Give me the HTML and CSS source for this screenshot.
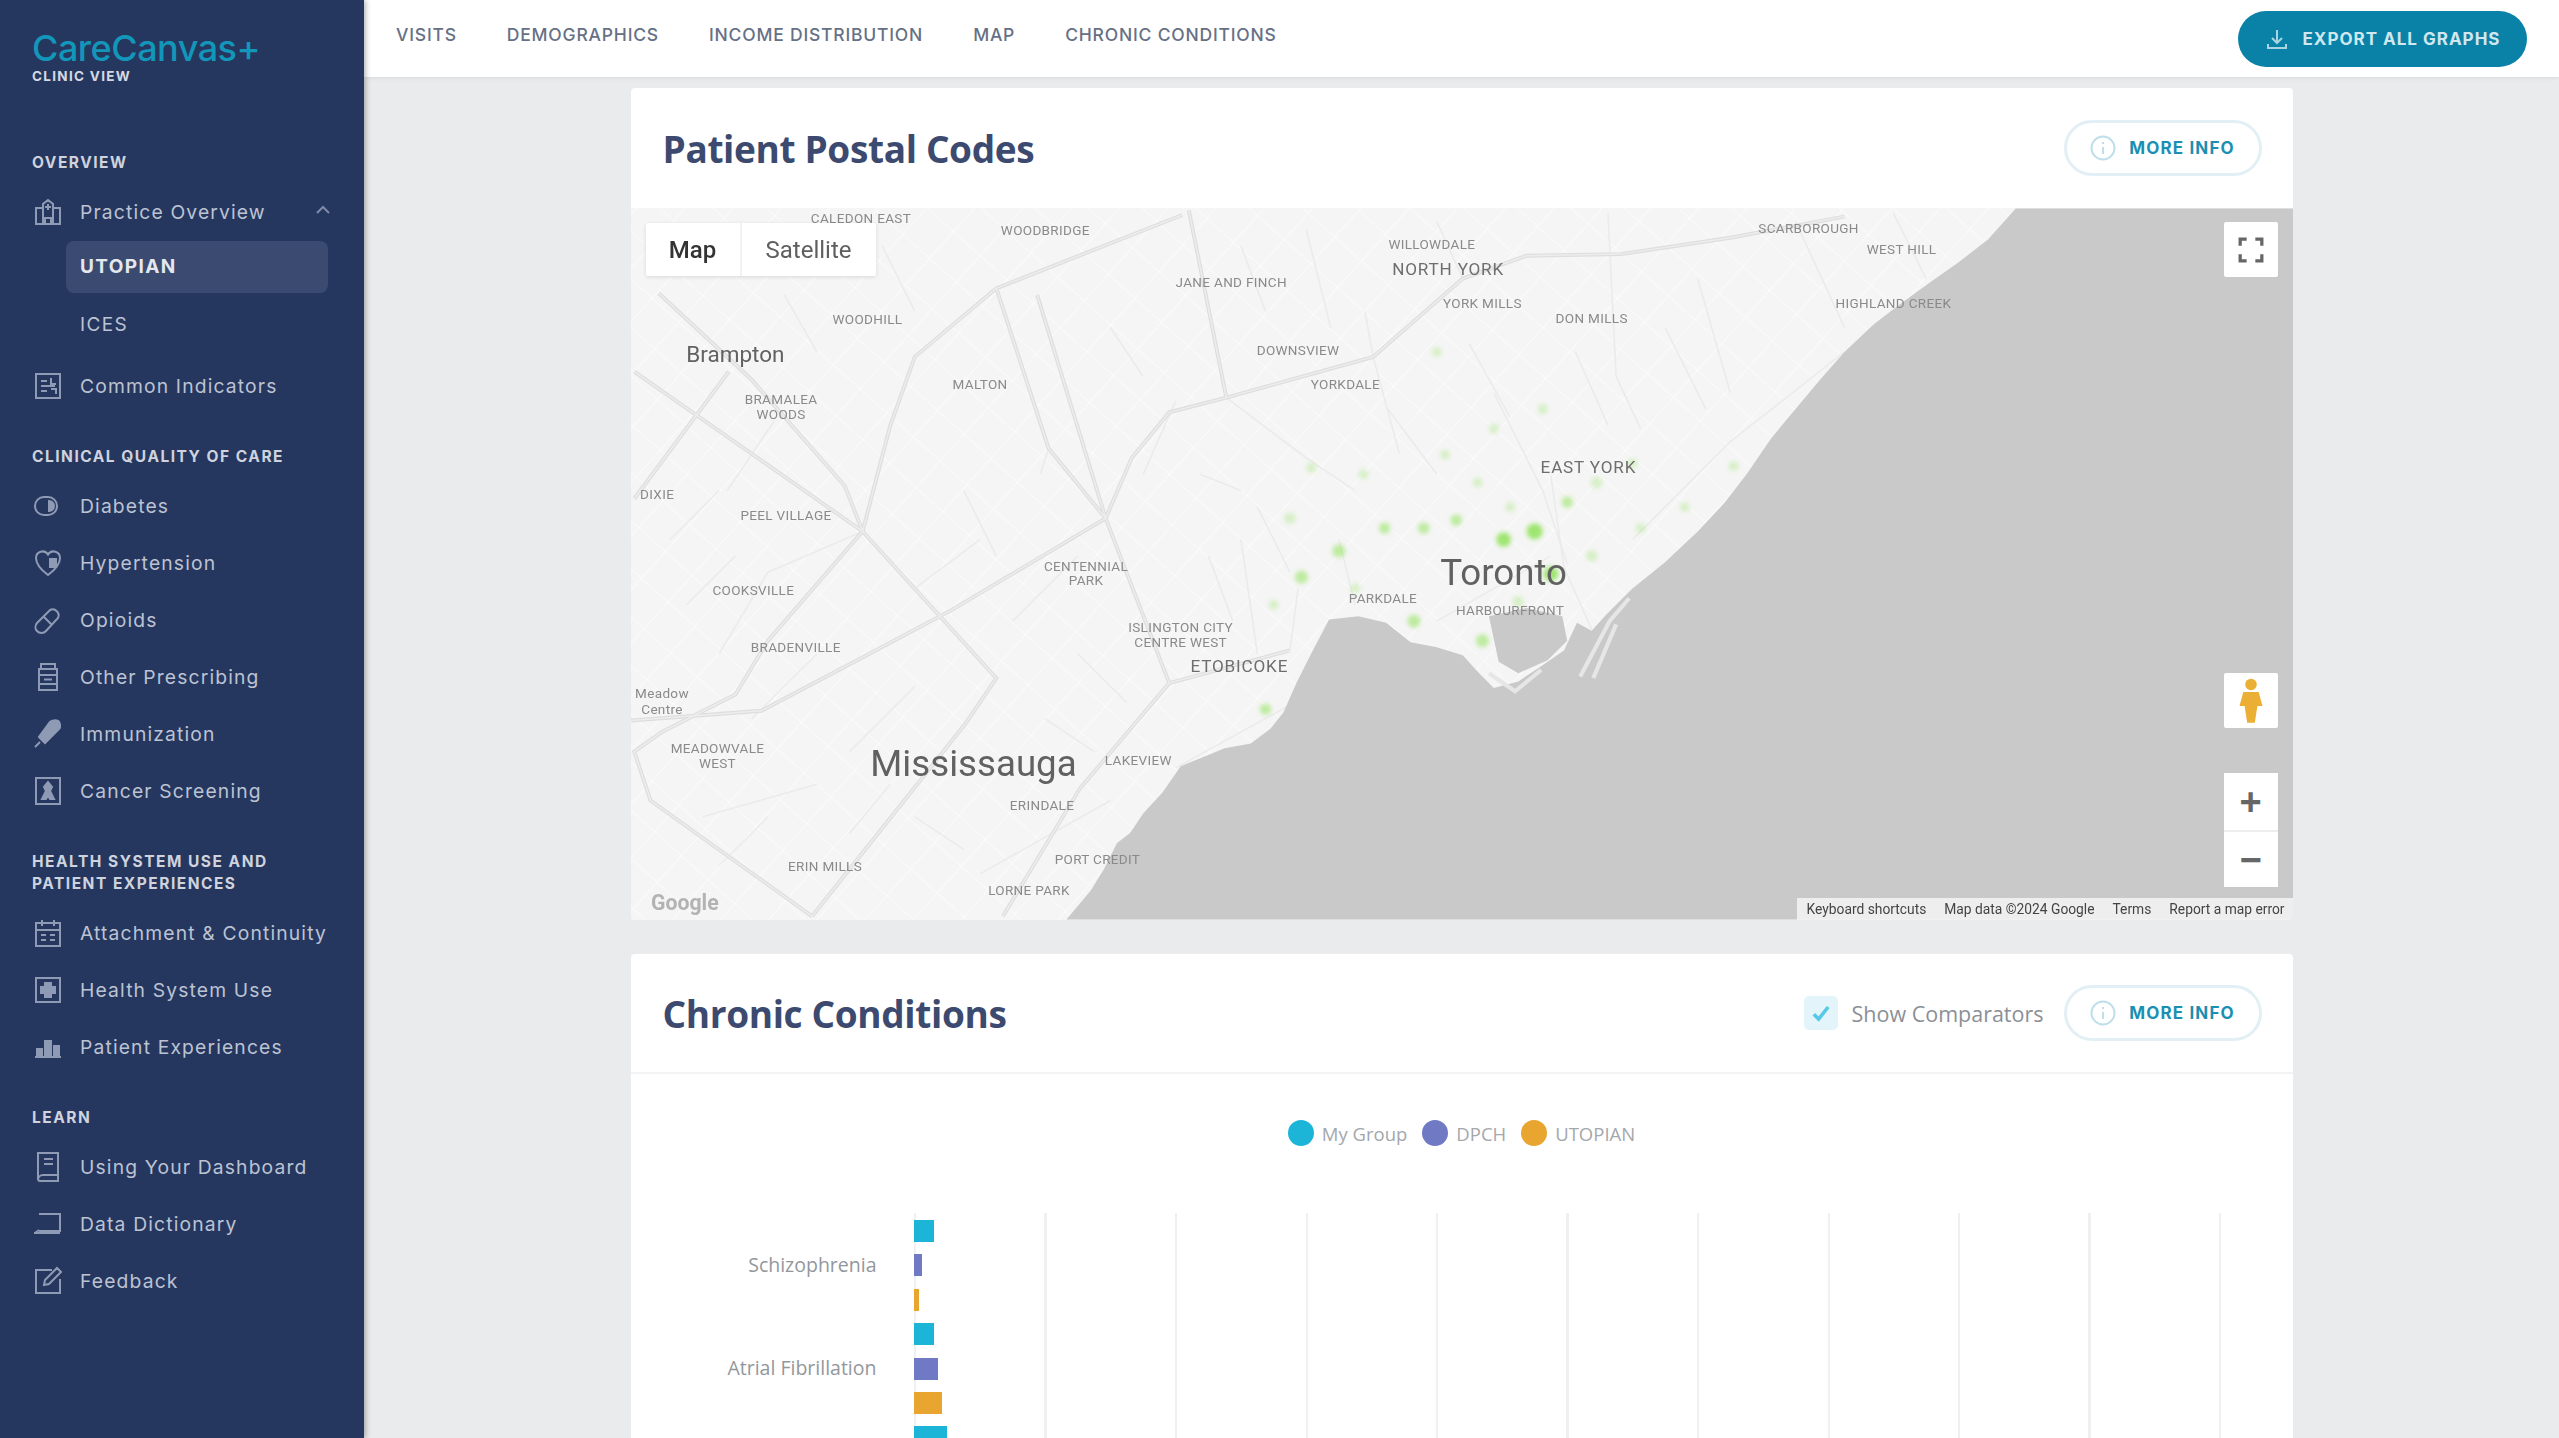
FILE: index.html
```html
<!DOCTYPE html>
<html lang="en">
<head>
<meta charset="utf-8">
<title>CareCanvas+ Clinic View</title>
<link rel="stylesheet" href="styles.css">
</head>
<body>
<div class="app">
  <aside class="sidebar">
    <div class="brand">
      <div class="logo">CareCanvas+</div>
      <div class="logo-sub">CLINIC VIEW</div>
    </div>

    <section class="section">
      <h2 class="section-title">OVERVIEW</h2>
      <a class="nav-row">
        <svg class="nav-icon" viewBox="0 0 32 32"><path d="M4 28V12h7V8l5-4 5 4v4h7v16zM11 12v16M21 12v16M13 28v-6h6v6M16 8v6M13 11h6"/></svg>
        <span class="nav-label">Practice Overview</span>
        <svg class="chevron" viewBox="0 0 16 10"><path d="M2 8l6-6 6 6"/></svg>
      </a>
      <div class="sub-list">
        <a class="sub-item active">UTOPIAN</a>
        <a class="sub-item">ICES</a>
      </div>
      <a class="nav-row">
        <svg class="nav-icon" viewBox="0 0 32 32"><path d="M4 4h24v24H4zM9 11h6M9 16h14M9 21h6M19 8v6h5M19 19h5v5"/></svg>
        <span class="nav-label">Common Indicators</span>
      </a>
    </section>

    <section class="section">
      <h2 class="section-title">CLINICAL QUALITY OF CARE</h2>
      <a class="nav-row">
        <svg class="nav-icon" viewBox="0 0 32 32"><path d="M16 7a9 9 0 1 1 0 18H12A9 9 0 0 1 12 7z"/><path d="M17 11a5 5 0 0 1 0 10z" class="fill"/></svg>
        <span class="nav-label">Diabetes</span>
      </a>
      <a class="nav-row">
        <svg class="nav-icon" viewBox="0 0 32 32"><path d="M16 28C8 22 4 17 4 11a6.500 6.500 0 0 1 12-3.500A6.500 6.500 0 0 1 28 11c0 6-4 11-12 17z"/><path d="M18 12l6 0 0 8-6 0z" class="fill"/></svg>
        <span class="nav-label">Hypertension</span>
      </a>
      <a class="nav-row">
        <svg class="nav-icon" viewBox="0 0 32 32"><path d="M5 27a6 6 0 0 1 0-8L18 6a6 6 0 0 1 8 8L14 27a6 6 0 0 1-9 0zM11 12l9 9"/></svg>
        <span class="nav-label">Opioids</span>
      </a>
      <a class="nav-row">
        <svg class="nav-icon" viewBox="0 0 32 32"><path d="M9 3h14v5H9zM7 8h18v21H7zM7 14h18M7 23h18M12 18.500h8"/></svg>
        <span class="nav-label">Other Prescribing</span>
      </a>
      <a class="nav-row">
        <svg class="nav-icon" viewBox="0 0 32 32"><path d="M3 29l5-5M7 19l6 6L27 11c2-2 1-7-1-8s-6-1-8 1z" class="fill"/></svg>
        <span class="nav-label">Immunization</span>
      </a>
      <a class="nav-row">
        <svg class="nav-icon" viewBox="0 0 32 32"><path d="M4 3h24v26H4z"/><path d="M16 7l4 5-2 4 4 8h-4l-2-4-2 4h-4l4-8-2-4z" class="fill"/></svg>
        <span class="nav-label">Cancer Screening</span>
      </a>
    </section>

    <section class="section">
      <h2 class="section-title">HEALTH SYSTEM USE AND PATIENT EXPERIENCES</h2>
      <a class="nav-row">
        <svg class="nav-icon" viewBox="0 0 32 32"><path d="M4 6h24v23H4zM4 13h24M10 3v6M22 3v6M9 18h5M18 18h5M9 23h5M18 23h5"/></svg>
        <span class="nav-label">Attachment &amp; Continuity</span>
      </a>
      <a class="nav-row">
        <svg class="nav-icon" viewBox="0 0 32 32"><path d="M4 4h24v24H4z"/><path d="M13 9h6v4h4v6h-4v4h-6v-4H9v-6h4z" class="fill"/></svg>
        <span class="nav-label">Health System Use</span>
      </a>
      <a class="nav-row">
        <svg class="nav-icon" viewBox="0 0 32 32"><path d="M3 26h26" /><path d="M5 18h5v8H5zM13 10h6v16h-6zM22 15h5v11h-5z" class="fill"/></svg>
        <span class="nav-label">Patient Experiences</span>
      </a>
    </section>

    <section class="section">
      <h2 class="section-title">LEARN</h2>
      <a class="nav-row">
        <svg class="nav-icon tall" viewBox="0 0 32 32"><path d="M6 2h20v22H11a5 5 0 0 0-5 5zM6 29a3 3 0 0 0 3 1h17v-6M12 8h9M12 13h9"/></svg>
        <span class="nav-label">Using Your Dashboard</span>
      </a>
      <a class="nav-row">
        <svg class="nav-icon" viewBox="0 0 32 32"><path d="M7 6h21v17H7M2 25h26M3 25l4-3"/></svg>
        <span class="nav-label">Data Dictionary</span>
      </a>
      <a class="nav-row">
        <svg class="nav-icon" viewBox="0 0 32 32"><path d="M28 14v14H4V5h16M12 20l1-5L25 3l4 4-12 12z"/></svg>
        <span class="nav-label">Feedback</span>
      </a>
    </section>
  </aside>

  <div class="main">
    <header class="topbar">
      <nav class="tabs">
        <a class="tab">VISITS</a>
        <a class="tab">DEMOGRAPHICS</a>
        <a class="tab">INCOME DISTRIBUTION</a>
        <a class="tab">MAP</a>
        <a class="tab">CHRONIC CONDITIONS</a>
      </nav>
      <button class="export">
        <svg class="export-icon" viewBox="0 0 24 24"><path d="M12 3v13M7 11l5 5 5-5M3 17v4h18v-4"/></svg>
        EXPORT ALL GRAPHS
      </button>
    </header>

    <div class="content">
      <article class="card">
        <div class="card-head">
          <h1 class="card-title">Patient Postal Codes</h1>
          <div class="card-actions">
            <button class="more">
              <svg class="more-icon" viewBox="0 0 26 26"><circle cx="13" cy="13" r="11.500"/><path d="M13 12v7M13 7v2"/></svg>
              MORE INFO
            </button>
          </div>
        </div>
        <div class="map">
          <svg class="map-canvas" viewBox="386 127 1019 436">
            <defs>
              <pattern id="streets" width="22" height="22" patternUnits="userSpaceOnUse" patternTransform="rotate(42)">
                <path d="M0 0H22M0 0V22" class="street-grid"/>
              </pattern>
              <filter id="soft" x="-60%" y="-60%" width="220%" height="220%"><feGaussianBlur stdDeviation="1.400"/></filter>
              <g id="majors">
                <path d="M386 441L466 435 536 398 583 373 677 317 693 280 716 252 751 243 841 218 896 170 935 156 993 155 1060 145 1130 132"/>
                <path d="M610 176L560 218 545 260 528 325 470 392 450 425 405 448 388 460 398 490 497 561"/>
                <path d="M388 227L528 325 610 415 591 443 497 561"/>
                <path d="M388 305L446 227M403 179L460 232 517 297 528 325"/>
                <path d="M610 176L724 131M610 176L642 274 677 317M635 180L677 317"/>
                <path d="M728 128L751 243M677 317L716 418 661 483 614 561M716 418L790 398"/>
              </g>
            </defs>
            <rect x="386" y="127" width="1019" height="436" class="land"/>
            <rect x="386" y="127" width="1019" height="436" fill="url(#streets)"/>
            <g class="road-minor">
              <path d="M841 218L857 277M841 218L836 190M896 170L880 135M950 291L958 347 975 385M985 130L990 230 1005 262"/>
              <path d="M474 257L445 300M440 400L470 350 528 325M642 274L637 290M700 290L720 245M770 310L790 350M760 330L770 400"/>
              <path d="M751 243L800 280 830 300M915 240L945 300 960 345M1000 330L1060 270 1130 215M1040 170L1060 240M1100 135L1130 200M1160 130L1180 170"/>
              <path d="M600 535L680 490M720 470L820 415M790 398L795 360M820 330L830 370M880 380L950 340"/>
              <path d="M430 500L500 480M520 460L560 420M620 380L660 340M460 440L500 400"/>
              <path d="M590 300L610 340M560 360L600 330M480 180L500 215M540 150L560 190M680 200L700 230M760 150L775 190M800 140L815 200M850 250L880 290M900 210L925 255M965 215L985 260M1020 200L1045 250M735 290L760 300M740 340L755 380M660 400L690 430M640 440L670 460M560 500L590 520M520 510L545 480M440 530L470 500M420 370L450 340M410 330L440 300"/>
            </g>
            <g class="road-major-edge"><use href="#majors"/></g>
            <g class="road-major-core"><use href="#majors"/></g>
            <path class="water" d="M653 563L668 545 676 532 684 516 692 510 700 498 712 485 723 469 750 458 766 455 778 446 786 436 794 418 803 400 814 379 832 377 849 381 864 393 880 396 896 401 906 412 915 421 930 417 942 409 958 398 966 381 975 386 984 376 1000 360 1020 344 1040 325 1056 308 1070 290 1085 268 1100 250 1115 232 1130 215 1148 198 1165 185 1183 172 1200 160 1218 146 1235 127H1405V563Z"/>
            <path class="water" d="M912 377L935 372 957 377 960 392 948 404 930 412 918 405Z"/>
            <path class="shore" d="M912 412L928 423 944 410M968 414L986 380 998 366M976 415L990 382"/>

            <g class="heat" filter="url(#soft)">
              <circle class="h3" cx="940" cy="325" r="5"/><circle class="h3" cx="921" cy="330" r="4.500"/><circle class="h3" cx="950" cy="351" r="4.500"/>
              <circle class="h2" cx="848" cy="323" r="3.500"/><circle class="h2" cx="872" cy="323" r="3.500"/><circle class="h2" cx="892" cy="318" r="3.500"/>
              <circle class="h2" cx="820" cy="337" r="4"/><circle class="h1" cx="790" cy="317" r="3.500"/><circle class="h2" cx="797" cy="353" r="4"/>
              <circle class="h2" cx="866" cy="380" r="4"/><circle class="h2" cx="908" cy="392" r="4"/><circle class="h1" cx="930" cy="368" r="3.500"/>
              <circle class="h1" cx="975" cy="340" r="3.500"/><circle class="h1" cx="1005" cy="323" r="3"/><circle class="h2" cx="960" cy="307" r="3.500"/>
              <circle class="h1" cx="978" cy="295" r="3.500"/><circle class="h1" cx="1000" cy="283" r="3"/><circle class="h1" cx="885" cy="278" r="3"/>
              <circle class="h1" cx="905" cy="295" r="3"/><circle class="h1" cx="925" cy="310" r="3"/><circle class="h1" cx="835" cy="290" r="3"/>
              <circle class="h1" cx="803" cy="286" r="3"/><circle class="h2" cx="775" cy="434" r="3.500"/><circle class="h1" cx="830" cy="360" r="3"/>
              <circle class="h1" cx="1032" cy="310" r="3"/><circle class="h1" cx="1062" cy="285" r="3"/><circle class="h1" cx="915" cy="262" r="3"/>
              <circle class="h1" cx="945" cy="250" r="3"/><circle class="h1" cx="880" cy="215" r="3"/><circle class="h1" cx="780" cy="370" r="3"/>
            </g>

            <g class="labels">
              <text class="lbl" x="527" y="136">CALEDON EAST</text>
              <text class="lbl" x="640" y="143">WOODBRIDGE</text>
              <text class="lbl" x="877" y="152">WILLOWDALE</text>
              <text class="lbl dark" x="887" y="168">NORTH YORK</text>
              <text class="lbl" x="754" y="175">JANE AND FINCH</text>
              <text class="lbl" x="908" y="188">YORK MILLS</text>
              <text class="lbl" x="975" y="197">DON MILLS</text>
              <text class="lbl" x="795" y="217">DOWNSVIEW</text>
              <text class="lbl" x="824" y="238">YORKDALE</text>
              <text class="lbl" x="600" y="238">MALTON</text>
              <text class="lbl" x="531" y="198">WOODHILL</text>
              <text class="lbl" x="478" y="247">BRAMALEA</text>
              <text class="lbl" x="478" y="256">WOODS</text>
              <text class="lbl" x="402" y="305">DIXIE</text>
              <text class="lbl" x="481" y="318">PEEL VILLAGE</text>
              <text class="lbl" x="461" y="364">COOKSVILLE</text>
              <text class="lbl" x="487" y="399">BRADENVILLE</text>
              <text class="lbl" x="405" y="427">Meadow</text>
              <text class="lbl" x="405" y="437">Centre</text>
              <text class="lbl" x="439" y="461">MEADOWVALE</text>
              <text class="lbl" x="439" y="470">WEST</text>
              <text class="lbl" x="665" y="349">CENTENNIAL</text>
              <text class="lbl" x="665" y="358">PARK</text>
              <text class="lbl" x="723" y="387">ISLINGTON CITY</text>
              <text class="lbl" x="723" y="396">CENTRE WEST</text>
              <text class="lbl dark" x="759" y="411">ETOBICOKE</text>
              <text class="lbl" x="697" y="468">LAKEVIEW</text>
              <text class="lbl" x="638" y="496">ERINDALE</text>
              <text class="lbl" x="505" y="533">ERIN MILLS</text>
              <text class="lbl" x="672" y="529">PORT CREDIT</text>
              <text class="lbl" x="630" y="548">LORNE PARK</text>
              <text class="lbl" x="847" y="369">PARKDALE</text>
              <text class="lbl" x="925" y="376">HARBOURFRONT</text>
              <text class="lbl dark" x="973" y="289">EAST YORK</text>
              <text class="lbl" x="1108" y="142">SCARBOROUGH</text>
              <text class="lbl" x="1165" y="155">WEST HILL</text>
              <text class="lbl" x="1160" y="188">HIGHLAND CREEK</text>
              <text class="city-sm" x="450" y="221">Brampton</text>
              <text class="city" x="596" y="475">Mississauga</text>
              <text class="city" x="921" y="358">Toronto</text>
              <text class="google" x="419" y="557">Google</text>
            </g>
          </svg>

          <div class="map-type">
            <span class="map-type-btn on">Map</span>
            <span class="map-type-btn">Satellite</span>
          </div>
          <button class="map-ctl fullscreen" aria-label="Fullscreen">
            <svg viewBox="0 0 24 24" class="ctl-icon"><path d="M2 8V2h6M16 2h6v6M22 16v6h-6M8 22H2v-6"/></svg>
          </button>
          <button class="map-ctl pegman" aria-label="Street View">
            <svg viewBox="0 0 20 36" class="peg-icon"><circle cx="10" cy="5" r="4.500"/><path d="M4 11h12l3 11h-4l-2 13H7L5 22H1z"/></svg>
          </button>
          <div class="zoom-ctl">
            <button class="zoom-btn">+</button>
            <button class="zoom-btn">&#8722;</button>
          </div>
          <div class="attribution">
            <span>Keyboard shortcuts</span>
            <span>Map data ©2024 Google</span>
            <span>Terms</span>
            <span>Report a map error</span>
          </div>
        </div>
      </article>

      <article class="card">
        <div class="card-head ruled">
          <h1 class="card-title">Chronic Conditions</h1>
          <div class="card-actions">
            <label class="compare">
              <span class="checkbox"><svg viewBox="0 0 20 20" class="check"><path d="M4 11l4 4 8-10"/></svg></span>
              Show Comparators
            </label>
            <button class="more">
              <svg class="more-icon" viewBox="0 0 26 26"><circle cx="13" cy="13" r="11.500"/><path d="M13 12v7M13 7v2"/></svg>
              MORE INFO
            </button>
          </div>
        </div>
        <div class="chart-body">
          <div class="legend">
            <span class="legend-item"><i class="dot mine"></i>My Group</span>
            <span class="legend-item"><i class="dot dpch"></i>DPCH</span>
            <span class="legend-item"><i class="dot utop"></i>UTOPIAN</span>
          </div>
          <div class="chart">
            <div class="group">
              <div class="group-label">Schizophrenia</div>
              <div class="bars">
                <div class="bar mine" style="width:20px"></div>
                <div class="bar dpch" style="width:8px"></div>
                <div class="bar utop" style="width:5px"></div>
              </div>
            </div>
            <div class="group">
              <div class="group-label">Atrial Fibrillation</div>
              <div class="bars">
                <div class="bar mine" style="width:20px"></div>
                <div class="bar dpch" style="width:24px"></div>
                <div class="bar utop" style="width:28px"></div>
              </div>
            </div>
            <div class="group">
              <div class="bars">
                <div class="bar mine" style="width:33px"></div>
              </div>
            </div>
          </div>
        </div>
      </article>
    </div>
  </div>
</div>
</body>
</html>
```

FILE: styles.css
```css
* { box-sizing: border-box; }
html, body { margin: 0; height: 100%; overflow: hidden; }
body { font-family: "Inter", "Liberation Sans", sans-serif; background: #e9ebec; color: #3c4a6f; }
h1, h2 { margin: 0; }
a { display: block; }
button { font: inherit; border: 0; cursor: pointer; }

.app { display: flex; height: 1438px; }

/* Sidebar */
.sidebar {
  width: 364px; flex: none; background: #26375f; padding: 0 0 0 32px;
  box-shadow: 2px 0 5px rgba(0, 0, 0, .28); position: relative; z-index: 2;
}
.brand { padding: 30px 0 66px; }
.logo { font-size: 36px; line-height: 36px; font-weight: 500; color: #1296b9; letter-spacing: -.5px; }
.logo-sub { font-size: 13.500px; line-height: 20px; font-weight: 700; color: #d5d9e3; letter-spacing: 1.3px; }
.section { margin-bottom: 32px; }
.section-title {
  font-size: 15.500px; line-height: 22px; font-weight: 700; color: #cfd3de;
  letter-spacing: 1.5px; margin-bottom: 9px; width: 285px;
}
.nav-row { display: flex; align-items: center; height: 57px; gap: 16px; padding-right: 33px; }
.nav-icon { width: 32px; height: 32px; flex: none; fill: none; stroke: #8f9ab5; stroke-width: 2; }
.nav-icon .fill { fill: #8f9ab5; stroke: #8f9ab5; }
.nav-icon.tall { height: 36px; }
.nav-label { font-size: 19.300px; font-weight: 400; color: #bcc3d3; white-space: nowrap; letter-spacing: 1.15px; flex: 1; }
.chevron { width: 16px; height: 10px; fill: none; stroke: #7f8aa8; stroke-width: 2; margin-top: -4px; }
.sub-list { margin: 1px 36px 0 34px; }
.sub-item {
  height: 52px; line-height: 52px; padding-left: 14px; font-size: 19px; color: #bcc3d3;
  margin-bottom: 6px; border-radius: 8px; letter-spacing: 1.4px;
}
.sub-item.active { background: #3a4a70; font-weight: 700; color: #e4e7ee; }

/* Main column */
.main { flex: 1; min-width: 0; display: flex; flex-direction: column; }
.topbar {
  height: 77px; flex: none; background: #fff; display: flex; align-items: center;
  justify-content: space-between; padding: 0 32px 0 32px;
  box-shadow: 0 1px 4px rgba(0, 0, 0, .08); position: relative; z-index: 1;
}
.tabs { display: flex; gap: 50px; margin-bottom: 8px; }
.tab { font-size: 17.500px; font-weight: 500; color: #667085; letter-spacing: .8px; white-space: nowrap; }
.export {
  width: 289px; height: 56px; border-radius: 28px; background: #0a82a8; color: #cfe7ef;
  font-size: 17px; font-weight: 700; letter-spacing: 1px; display: flex; align-items: center;
  justify-content: center; gap: 14px;
}
.export-icon { width: 24px; height: 24px; fill: none; stroke: #a9d5e3; stroke-width: 2; }

.content { flex: 1; min-height: 0; overflow: hidden; padding-top: 11px; display: flex; flex-direction: column; align-items: center; gap: 34px; }
.card { width: 1662px; flex: none; background: #fff; border-radius: 4px; overflow: hidden; }
.card-head { height: 120px; display: flex; align-items: center; justify-content: space-between; padding: 0 31px 0 32px; }
.card-head.ruled { border-bottom: 2px solid #f2f3f4; }
.card-title { font-family: "Open Sans", sans-serif; font-size: 37px; font-weight: 700; color: #3c4a6f; letter-spacing: -.35px; }
.card-actions { display: flex; align-items: center; gap: 20px; }
.more {
  width: 198px; height: 56px; border-radius: 28px; background: #fff; border: 3px solid #e2f0f5;
  display: flex; align-items: center; justify-content: center; gap: 13px;
  font-size: 17px; font-weight: 700; color: #1b8fb2; letter-spacing: 1.15px;
}
.more-icon { width: 26px; height: 26px; flex: none; fill: none; stroke: #bcdfe9; stroke-width: 2; }
.compare { display: flex; align-items: center; gap: 14px; font-family: "Open Sans", sans-serif; font-size: 21.500px; color: #8b8f96; }
.checkbox { width: 34px; height: 34px; border-radius: 5px; background: #e3f4fa; display: flex; align-items: center; justify-content: center; }
.check { width: 24px; height: 24px; fill: none; stroke: #55c9e6; stroke-width: 3; }

/* Map */
.map { position: relative; height: 712px; overflow: hidden; background: #f5f5f5; }
.map-canvas { display: block; width: 100%; height: 100%; }
.land { fill: #f5f5f5; }
.street-grid { fill: none; stroke: #fff; stroke-width: .7; }
.water { fill: #c9c9c9; }
.shore { fill: none; stroke: #e6e6e6; stroke-width: 2.500; }
.road-major-edge { fill: none; stroke: #dedede; stroke-width: 2.400; }
.road-major-core { fill: none; stroke: #ededed; stroke-width: .9; }
.road-minor path { fill: none; stroke: #ebebeb; stroke-width: 1; }
.heat circle { fill: #8fe35a; }
.heat .h1 { opacity: .3; }
.heat .h2 { opacity: .55; }
.heat .h3 { opacity: .85; }
.labels text { font-family: "Roboto", "Liberation Sans", sans-serif; text-anchor: middle; }
.lbl { font-size: 8.300px; fill: #8a8a8a; letter-spacing: .2px; }
.lbl.dark { fill: #6e6e6e; font-size: 10.500px; letter-spacing: .5px; }
.city-sm { font-size: 13.800px; fill: #616161; }
.city { font-size: 22.500px; fill: #616161; }
.google { font-size: 13px; font-weight: 700; fill: #b3b3b3; }

.map-type { position: absolute; left: 15px; top: 15px; height: 53px; display: flex; background: #fff; border-radius: 2px; box-shadow: 0 1px 4px rgba(0, 0, 0, .12); }
.map-type-btn { display: flex; align-items: center; justify-content: center; font-family: "Roboto", sans-serif; font-size: 24px; color: #5f5f5f; width: 134px; }
.map-type-btn.on { width: 96px; font-weight: 500; color: #333; border-right: 2px solid #f2f2f2; }
.map-ctl { position: absolute; right: 15px; width: 54px; height: 55px; background: #fff; border-radius: 2px; display: flex; align-items: center; justify-content: center; padding: 0; }
.fullscreen { top: 14px; }
.pegman { top: 465px; }
.ctl-icon { width: 26px; height: 26px; fill: none; stroke: #666; stroke-width: 3; }
.peg-icon { width: 26px; height: 46px; fill: #ebaf35; }
.zoom-ctl { position: absolute; right: 15px; top: 565px; width: 54px; background: #fff; border-radius: 2px; display: flex; flex-direction: column; }
.zoom-btn { height: 57px; background: #fff; font-family: "Liberation Sans", sans-serif; font-size: 38px; font-weight: 700; line-height: 1; color: #666; padding: 0; }
.zoom-btn + .zoom-btn { border-top: 2px solid #eee; }
.attribution {
  position: absolute; right: 0; bottom: 0; height: 22px; padding: 0 8px 0 10px; display: flex; gap: 18px; align-items: center;
  background: rgba(245, 245, 245, .85); font-family: "Roboto", sans-serif; font-size: 13.800px; color: #444; white-space: nowrap;
}

/* Chart */
.chart-body { padding-top: 44px; height: 380px; }
.legend { display: flex; justify-content: center; gap: 15px; height: 30px; align-items: center; }
.legend-item { display: flex; align-items: center; gap: 8px; font-family: "Open Sans", sans-serif; font-size: 18.500px; color: #a4a7ab; }
.dot { width: 26px; height: 26px; border-radius: 50%; display: block; }
.mine { background: #1cb5d8; }
.dpch { background: #6f79c4; }
.utop { background: #e8a530; }
.chart {
  margin: 65px 0 0 283px; width: 1330px; height: 260px; padding-top: 7px;
  background: repeating-linear-gradient(90deg, #eef0f1 0, #eef0f1 2px, transparent 2px, transparent 130.500px);
}
.group { position: relative; height: 103.200px; }
.group-label {
  position: absolute; right: 100%; margin-right: 37px; top: 0; height: 90px; line-height: 90px;
  font-family: "Open Sans", sans-serif; font-size: 19.500px; color: #93979c; white-space: nowrap;
}
.bars { display: flex; flex-direction: column; gap: 12.400px; }
.bar { height: 22px; }
```
